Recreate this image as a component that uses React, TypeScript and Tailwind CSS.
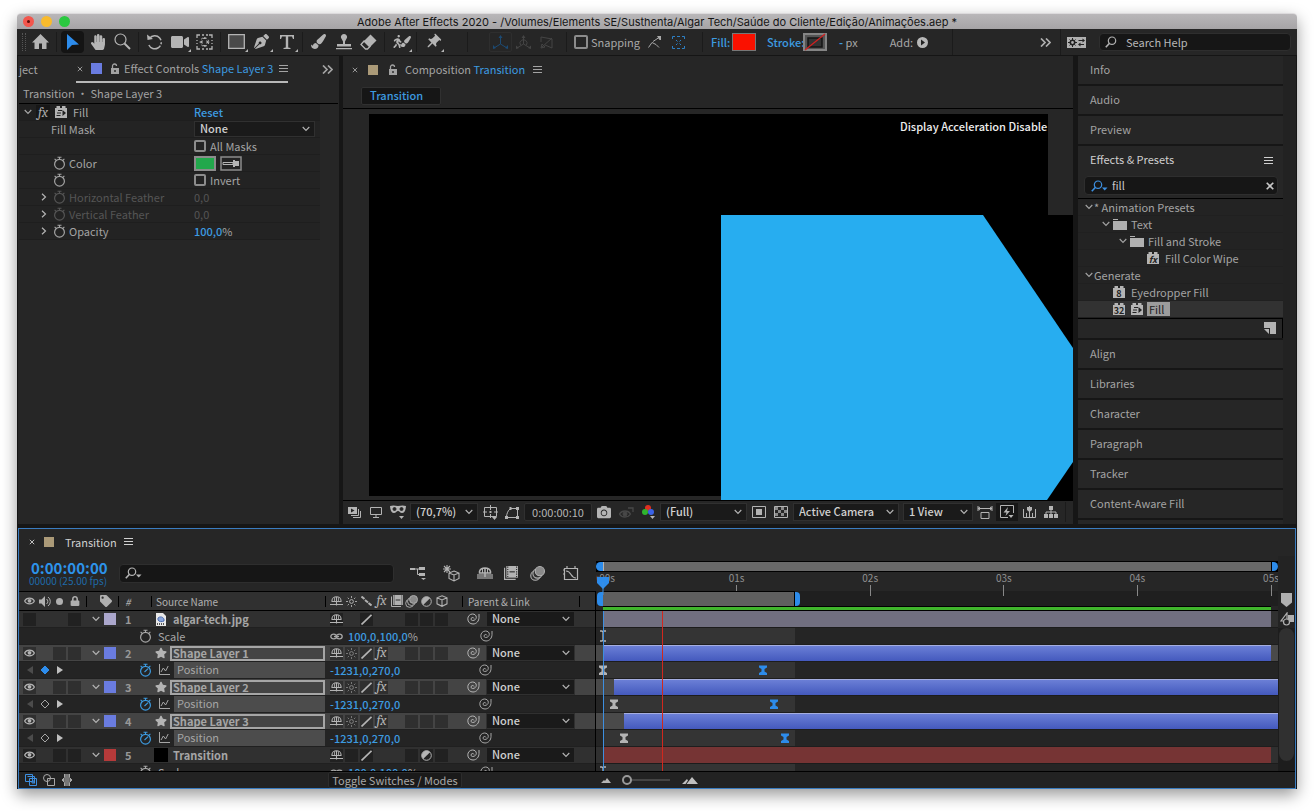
import type { ReactNode } from "react";
import clsx from "clsx";
import {
  FaCamera,
  FaHandPaper,
  FaLock,
  FaPaintBrush,
  FaPenNib,
  FaStar,
  FaTag,
  FaVideo,
  FaWalking,
} from "react-icons/fa";
import { MdPushPin } from "react-icons/md";

/* ---------- icons ---------- */

type SvgProps = {
  w: number;
  h?: number;
  className?: string;
  children: ReactNode;
};

function Svg({ w, h = w, className, children }: SvgProps) {
  return (
    <svg
      width={w}
      height={h}
      viewBox={`0 0 ${w} ${h}`}
      fill="none"
      stroke="currentColor"
      className={clsx("shrink-0", className)}
      aria-hidden="true"
    >
      {children}
    </svg>
  );
}

const Chevron = ({ className }: { className?: string }) => (
  <Svg w={8} h={6} className={className}>
    <path d="M.7 1l3.3 3.5L7.3 1" strokeWidth="1.1" />
  </Svg>
);

const ChevronRight = () => (
  <Svg w={6} h={8}>
    <path d="M1 .7l3.5 3.3L1 7.3" strokeWidth="1.2" />
  </Svg>
);

const DoubleChevron = () => (
  <Svg w={11} h={9}>
    <path d="M1 .5l4 4-4 4M6 .5l4 4-4 4" strokeWidth="1.7" />
  </Svg>
);

const Menu = () => (
  <Svg w={9} h={8}>
    <path d="M0 .5h9M0 3.5h9M0 6.5h9" strokeWidth="1" />
  </Svg>
);

const Close = () => (
  <Svg w={6}>
    <path d="M.8.8l4.4 4.4M5.2.8L.8 5.2" strokeWidth=".9" />
  </Svg>
);

const OpenLock = () => (
  <Svg w={10} h={11}>
    <path d="M2.5 6V3a2 2 0 0 1 4 0" strokeWidth="1.3" />
    <path d="M1 5h8v6H1z" fill="currentColor" stroke="none" />
    <path d="M5 7v2" stroke="#262626" strokeWidth="1.4" />
  </Svg>
);

const Stopwatch = () => (
  <Svg w={13} h={14}>
    <circle cx="6.5" cy="8.2" r="4.9" strokeWidth="1.2" />
    <path d="M6.5 1.5v2M4.5 1.2h4M1.6 2.8l1.6 1.6M11.4 2.8L9.8 4.4" strokeWidth="1.1" />
  </Svg>
);

const StopwatchOn = () => (
  <Svg w={13} h={14}>
    <circle cx="6.5" cy="8.2" r="4.9" strokeWidth="1.2" />
    <path d="M6.5 1.5v2M4.5 1.2h4M1.6 2.8l1.6 1.6M11.4 2.8L9.8 4.4M5.5 9l3.6-3.4" strokeWidth="1.1" />
  </Svg>
);

const GraphIcon = () => (
  <Svg w={12} h={12}>
    <path d="M1.5 0v10.5H12M3 8l2.3-4 2.3 3 2.6-5" strokeWidth="1" />
  </Svg>
);

const Spiral = () => (
  <Svg w={13} h={12}>
    <path
      d="M7 5.5A1.5 1.5 0 1 0 5.7 7.5C7.8 7.5 9.3 6 9.3 4.3 9.3 2.3 7.7 1 5.5 1A4.8 4.8 0 0 0 .8 5.8C.8 9 3 11 6 11c3.5 0 6-3 6-6.5V1"
      strokeWidth="1"
    />
  </Svg>
);

const Search = ({ arrow }: { arrow?: boolean }) => (
  <Svg w={arrow ? 17 : 12} h={12}>
    <circle cx="7" cy="4.7" r="3.7" strokeWidth="1.2" />
    <path d="M4.5 7.3L.8 11.3" strokeWidth="1.6" />
    {arrow && <path d="M11 7.5h5.5L13.7 10.5z" fill="currentColor" stroke="none" />}
  </Svg>
);

const Shy = () => (
  <Svg w={13} h={12}>
    <path d="M2 6.5V5.5a4.5 3.8 0 0 1 9 0v1zM0 9.5h13M6.5 2v8.5" strokeWidth="1.1" />
    <path d="M4.5 2.500v4M8.500 2.500v4" strokeWidth=".8" />
  </Svg>
);

const Sun = () => (
  <Svg w={11}>
    <circle cx="5.5" cy="5.5" r="1.9" />
    <path d="M5.5 0v2M5.5 9v2M0 5.5h2M9 5.5h2M1.7 1.7L3 3M8 8l1.3 1.3M9.3 1.7L8 3M3 8L1.7 9.3" strokeWidth=".9" />
  </Svg>
);

const Slash = () => (
  <Svg w={11}>
    <path d="M.5 10.5L10.5.8" strokeWidth="1.7" />
  </Svg>
);

const Quality = () => (
  <Svg w={11} h={10}>
    <path d="M.5.5l3 2.5M4 4l3 2.5M7.5 7l3 2.5" strokeWidth="2" />
  </Svg>
);

const Film = ({ size = 12 }: { size?: number }) => (
  <svg width={size} height={size} viewBox="0 0 12 12" fill="none" stroke="currentColor" aria-hidden="true">
    <path d="M.5 1.5v10h9.5" />
    <path d="M2 0h10v10H2z" fill="currentColor" stroke="none" />
    <path d="M3.2.5v9M10.8.5v9" stroke="#303030" strokeDasharray="1 1" />
    <path d="M4.7 5h4.6" stroke="#303030" />
  </svg>
);

const MotionBlur = ({ size = 12 }: { size?: number }) => (
  <svg width={size} height={size} viewBox="0 0 14 14" fill="#303030" stroke="currentColor" aria-hidden="true">
    <circle cx="5" cy="9" r="4.3" />
    <circle cx="7" cy="7" r="4.3" />
    <circle cx="9.2" cy="4.8" r="4.3" fill="#8a8a8a" />
  </svg>
);

const Adjustment = () => (
  <Svg w={11}>
    <circle cx="5.5" cy="5.5" r="4.8" />
    <path d="M9 2.2A4.7 4.7 0 0 0 2.2 9z" fill="currentColor" stroke="none" />
  </Svg>
);

const Cube = () => (
  <Svg w={12}>
    <path d="M6 .8l5 2v6l-5 2.5-5-2.5v-6zM1 2.8l5 2.2 5-2.2M6 5v6.3" strokeWidth="1.1" />
  </Svg>
);

const Eye = () => (
  <Svg w={11} h={8}>
    <path d="M.6 4C2.5.2 8.5.2 10.4 4 8.5 7.8 2.5 7.8.6 4z" strokeWidth="1.1" />
    <circle cx="5.5" cy="3.8" r="1.9" fill="currentColor" stroke="none" />
  </Svg>
);

const Link = () => (
  <Svg w={13} h={7}>
    <ellipse cx="3.7" cy="3.5" rx="2.9" ry="2.3" strokeWidth="1.3" />
    <ellipse cx="9.3" cy="3.5" rx="2.9" ry="2.3" strokeWidth="1.3" />
    <path d="M4 3.5h5" strokeWidth="1.3" />
  </Svg>
);

/* plug-in brick shown beside every effect */
function Brick({ children }: { children: ReactNode }) {
  return (
    <svg width={12} height={12} viewBox="0 0 12 12" className="shrink-0" aria-hidden="true">
      <path d="M0 2h1.5V0H5v2h2V0h3.5v2H12v10H0z" fill="#b4b4b4" />
      <g fill="#222" stroke="none">
        {children}
      </g>
    </svg>
  );
}

const BrickArrow = () => (
  <Brick>
    <path d="M3 4h4v1H3zM2 6.5h4v1H2zM1.5 9h4v1h-4zM7.5 4l3.500 3-3.500 3z" />
  </Brick>
);

const BrickText = ({ label, italic }: { label: string; italic?: boolean }) => (
  <Brick>
    <text
      x="6"
      y="10.5"
      fontSize="9"
      fontWeight="700"
      fontStyle={italic ? "italic" : "normal"}
      textAnchor="middle"
    >
      {label}
    </text>
  </Brick>
);

const Folder = () => (
  <Svg w={14} h={11}>
    <path d="M0 0h5v1H0zM0 2h14v9H0z" fill="#b0b0b0" stroke="none" />
  </Svg>
);

const AnchorTool = () => (
  <Svg w={17} h={16}>
    <path d="M1 4V1h3M6 1h2M10 1h2M13 1h3v3M16 6v1M16 9v1M16 12v3h-3M12 15h-2M8 15H6M4 15H1v-3M1 10V9M1 7V6" strokeWidth="1.3" />
    <path d="M4 8L6.5 6v4zM13 8L10.5 6v4zM8.5 3l2 2h-4zM8.5 13l2-2h-4z" fill="currentColor" stroke="none" />
    <circle cx="8.5" cy="8" r="4.3" strokeDasharray="2 2" />
  </Svg>
);

/* ---------- small controls ---------- */

function Sep({ className }: { className?: string }) {
  return <div className={clsx("mx-[3px] h-5 w-px shrink-0 bg-[#1b1b1b]", className)} />;
}

type ToolProps = {
  name: string;
  active?: boolean;
  more?: boolean;
  children: ReactNode;
};

function Tool({ name, active, more, children }: ToolProps) {
  return (
    <button
      type="button"
      aria-label={name}
      className={clsx(
        "relative mx-px flex h-[22px] w-[23px] shrink-0 items-center justify-center rounded-sm pb-px",
        active ? "bg-[#141414] text-[#2d8ceb]" : "text-[#b4b4b4]",
      )}
    >
      {children}
      {more && (
        <Svg w={3} className="absolute right-0 bottom-px">
          <path d="M3 0v3H0z" fill="currentColor" stroke="none" />
        </Svg>
      )}
    </button>
  );
}

type DropdownProps = {
  label: string;
  value: string;
  className?: string;
};

function Dropdown({ label, value, className }: DropdownProps) {
  return (
    <div className={clsx("relative flex shrink-0 items-center border border-[#303030] bg-[#1a1a1a]", className)}>
      <select
        aria-label={label}
        defaultValue={value}
        className="-my-1 block h-4 w-full appearance-none bg-transparent pb-px pl-[5px] leading-[15px] font-medium text-[#d0d0d0] outline-none"
      >
        <option>{value}</option>
      </select>
      <Chevron className="pointer-events-none absolute top-1/2 right-1 -mt-[3px] text-[#b4b4b4]" />
    </div>
  );
}

function IconCell({ name, dark, children }: { name: string; dark?: boolean; children: ReactNode }) {
  return (
    <button
      type="button"
      aria-label={name}
      className={clsx("flex h-[18px] w-[22px] shrink-0 items-center justify-center", dark && "bg-[#171717]")}
    >
      {children}
    </button>
  );
}

/* ---------- title and tools ---------- */

function TitleBar() {
  return (
    <header className="flex h-4 items-center rounded-t-sm border-t border-[#dcdadc] bg-linear-to-b from-[#b9b7b9] to-[#a6a4a6]">
      <div className="flex w-0 gap-[7px] pl-[6px]">
        <span className="flex size-[11px] shrink-0 items-center justify-center rounded-full bg-[#f2564d]">
          <span className="size-[3px] rounded-full bg-[#5c0b06]" />
        </span>
        <span className="size-[11px] shrink-0 rounded-full bg-[#f9bb2d]" />
        <span className="size-[11px] shrink-0 rounded-full bg-[#2bc840]" />
      </div>
      <h1 className="flex-1 truncate pr-[6px] text-center font-['Inter',sans-serif] text-[11px] leading-[14px] text-[#151515]">
        Adobe After Effects 2020 - /Volumes/Elements SE/Susthenta/Algar Tech/Saúde do Cliente/Edição/Animações.aep *
      </h1>
    </header>
  );
}

function Toolbar() {
  return (
    <div className="flex h-[27px] items-center overflow-hidden border-b border-[#151515] bg-[#262626]">
      <div className="ml-[5px] h-[18px] w-1 shrink-0 border-x border-dotted border-[#555]" />
      <div className="ml-[2px]">
        <Tool name="Home">
          <Svg w={17} h={15}>
            <path d="M8.5 0L17 8.5h-2.5V15H10V9.5H7V15H2.5V8.5H0z" fill="currentColor" stroke="none" />
          </Svg>
        </Tool>
      </div>
      <Sep />
      <Tool name="Selection" active>
        <Svg w={13} h={16}>
          <path d="M1 0l12 10.5-7 .5-5 5z" fill="currentColor" stroke="none" />
        </Svg>
      </Tool>
      <Tool name="Hand">
        <FaHandPaper size={16} />
      </Tool>
      <Tool name="Zoom">
        <Svg w={17}>
          <circle cx="6.5" cy="6.5" r="5.5" strokeWidth="1.2" />
          <path d="M10.5 10.5l5.500 5.500" strokeWidth="2" />
        </Svg>
      </Tool>
      <Sep />
      <Tool name="Rotation">
        <Svg w={17} h={16}>
          <path d="M3.5 4.5A6.5 6.5 0 1 1 2.5 10" strokeWidth="1.5" strokeDasharray="14 2 2 1.5" />
          <path d="M1 .5l.5 5.5 5.5-1z" fill="currentColor" stroke="none" />
        </Svg>
      </Tool>
      <Tool name="Camera" more>
        <FaVideo size={18} />
      </Tool>
      <Tool name="Pan behind">
        <AnchorTool />
      </Tool>
      <Sep />
      <Tool name="Rectangle" more>
        <Svg w={17} h={15}>
          <path d="M.7.7h15.6v13.6H.7z" fill="#4a4a4a" strokeWidth="1.3" />
        </Svg>
      </Tool>
      <Tool name="Pen" more>
        <FaPenNib size={15} />
      </Tool>
      <Tool name="Type" more>
        <Svg w={14}>
          <path d="M0 0h14v4h-1l-1-2.5H8.2V12.5l2.3.5v1h-7v-1l2.300-.5V1.5H2L1 4H0z" fill="currentColor" stroke="none" />
        </Svg>
      </Tool>
      <Sep />
      <Tool name="Brush">
        <FaPaintBrush size={15} />
      </Tool>
      <Tool name="Clone stamp">
        <Svg w={16}>
          <path d="M8 0a3 3 0 0 1 2.3 5L9 7.5v2.5h6v2.5H1V10h6V7.5L5.7 5A3 3 0 0 1 8 0zM0 14h16v1.3H0z" fill="currentColor" stroke="none" />
        </Svg>
      </Tool>
      <Tool name="Eraser">
        <Svg w={17} h={16}>
          <path d="M10.5.5l6 6-7 7-6-6z" fill="currentColor" stroke="none" />
          <path d="M4.5 6.5L1 10.500l4.500 4.500h2l3-3" strokeWidth="1.3" />
        </Svg>
      </Tool>
      <Sep />
      <Tool name="Roto brush" more>
        <FaWalking size={13} />
        <FaPaintBrush size={11} className="-ml-1" />
      </Tool>
      <Sep />
      <Tool name="Puppet pin" more>
        <MdPushPin size={18} className="rotate-45" />
      </Tool>
      <Sep className="ml-[22px]" />
      <div className="ml-[18px] flex shrink-0 items-center text-[#454545]">
        <button type="button" aria-label="Local axis" className="flex h-5 w-[23px] items-center justify-center rounded-xs border border-[#2e2e2e] text-[#1c4a73]">
          <Svg w={15} h={14}>
            <path d="M7.5 1v8M7.5 9L1 13M7.5 9l6.5 4" />
            <path d="M7.5 0l2 3h-4zM0 14v-4l3 3zM15 14v-4l-3 3z" fill="currentColor" stroke="none" />
          </Svg>
        </button>
        <button type="button" aria-label="World axis" className="flex h-5 w-[23px] items-center justify-center">
          <Svg w={15} h={14}>
            <path d="M7.5 1v8M7.5 9L1 13M7.5 9l6.5 4" />
            <path d="M4.5 10a3.5 3.5 0 1 1 6 0" />
            <path d="M7.5 0l2 3h-4zM0 14v-3.5l3 2.5zM15 14v-3.5l-3 2.500z" fill="currentColor" stroke="none" />
          </Svg>
        </button>
        <button type="button" aria-label="View axis" className="flex h-5 w-[23px] items-center justify-center">
          <Svg w={13}>
            <path d="M1 1l11 2v9L5 9M1 1v5M12 2L2 11M1 12l1-4 3 3z" />
          </Svg>
        </button>
      </div>
      <Sep className="ml-2" />
      <label className="ml-1 flex w-[69px] shrink-0 items-center gap-[3px] text-[#a8a8a8]">
        <input type="checkbox" className="size-[14px] shrink-0 appearance-none rounded-xs border-2 border-[#8c8c8c]" />
        Snapping
      </label>
      <IconCell name="Snap edges">
        <Svg w={13} h={12} className="text-[#a8a8a8]">
          <path d="M.5 11.5L4 6.5l4 2 3 3M5 5.5l6-4" />
          <path d="M9 0h4v4h-1.5z" fill="currentColor" stroke="none" />
        </Svg>
      </IconCell>
      <div className="ml-[2px] flex">
        <IconCell name="Snap extend">
          <Svg w={13} className="text-[#2d7fc4]">
            <path d="M.5 3V.5H3M5 .5h3M10 .5h2.5V3M12.5 10v2.5H10M8 12.5H5M3 12.5H.5V10M4 4l1.500 1.500M9 4L7.500 5.500M4 9l1.500-1.500M9 9L7.500 7.500" />
          </Svg>
        </IconCell>
      </div>
      <Sep className="ml-[13px]" />
      <button type="button" className="ml-[5px] flex shrink-0 items-center font-medium text-[#3d9be0]">
        <span className="w-[21px] text-left">Fill:</span>
        <span className="h-[18px] w-6 border border-[#777] bg-[#fa1100]" />
      </button>
      <button type="button" className="ml-[11px] flex shrink-0 items-center font-medium text-[#3d9be0]">
        <span className="w-9 text-left whitespace-nowrap">Stroke:</span>
        <Svg w={24} h={18}>
          <path d="M1 1h22v16H1z" fill="#555" stroke="#858585" strokeWidth="2" />
          <path d="M5 5h14v9H5z" fill="#333" stroke="#151515" strokeWidth="1.5" />
          <path d="M2 17L22 1" stroke="#d41f1f" strokeWidth="1.3" />
        </Svg>
      </button>
      <span className="ml-3 shrink-0 text-[#a8a8a8]">
        <b className="text-[#3d9be0]">-</b> px
      </span>
      <button type="button" className="ml-8 flex shrink-0 items-center gap-1 text-[#a8a8a8]">
        Add:
        <Svg w={11}>
          <circle cx="5.5" cy="5.5" r="5.5" fill="#b8b8b8" stroke="none" />
          <path d="M4 2.5l4 3-4 3z" fill="#222" stroke="none" />
        </Svg>
      </button>
      <Sep className="ml-6 h-[26px]" />
      <div className="ml-auto flex shrink-0 items-center pr-[6px] text-[#b0b0b0]">
        <button type="button" aria-label="More workspaces">
          <DoubleChevron />
        </button>
        <Sep className="ml-[9px] h-[26px]" />
        <button type="button" aria-label="Workspace" className="mr-[13px] ml-[3px]">
          <Svg w={19} h={11}>
            <path d="M0 0h19v11H0z" fill="#b0b0b0" stroke="none" />
            <circle cx="5.5" cy="5.5" r="2.2" stroke="#222" strokeWidth="1.6" />
            <path d="M5.5 1v2M5.5 8v2M1 5.5h2M8 5.5h2M2.5 2.5l1 1M8.5 2.5l-1 1M2.5 8.5l1-1M8.5 8.5l-1-1M11.5 3.5h5M13 7.5h4" stroke="#222" />
            <path d="M11 7.5l2.5-2v4zM18 3.5l-2.5-2v4z" fill="#222" stroke="none" />
          </Svg>
        </button>
        <label className="flex h-[18px] w-48 items-center rounded-sm border border-[#2e2e2e] bg-[#161616] pl-[5px]">
          <Search />
          <input
            type="text"
            aria-label="Search Help"
            placeholder="Search Help"
            className="ml-[9px] w-full min-w-0 bg-transparent outline-none placeholder:text-[#b8b8b8]"
          />
        </label>
      </div>
    </div>
  );
}

/* ---------- effect controls ---------- */

function EffectRow({ label, dim, expandable, children }: { label?: string; dim?: boolean; expandable?: boolean; children: ReactNode }) {
  return (
    <div className={clsx("flex h-[17px] items-center border-b border-[#1e1e1e]", dim ? "text-[#555]" : "text-[#a3a3a3]")}>
      <div className="flex w-[175px] shrink-0 items-center pl-[22px]">
        <span className="w-3 text-[#b4b4b4]">{expandable && <ChevronRight />}</span>
        <Stopwatch />
        <span className="ml-[3px]">{label}</span>
      </div>
      {children}
    </div>
  );
}

function EffectControls() {
  return (
    <section className="flex w-[321px] shrink-0 flex-col overflow-hidden bg-[#262626] px-px">
      <div className="flex h-[27px] shrink-0 items-start text-[#a3a3a3]">
        <span className="w-[57px] shrink-0 leading-[26px]">ject</span>
        <div className="flex h-[27px] w-[212px] shrink-0 items-center border-b-2 border-[#b8b8b8]">
          <button type="button" aria-label="Close tab" className="pl-px">
            <Close />
          </button>
          <span className="ml-2 size-[11px] shrink-0 bg-[#6a7ce0]" />
          <span className="ml-2">
            <OpenLock />
          </span>
          <h2 className="ml-1 whitespace-nowrap">
            Effect Controls <span className="text-[#3d9be0]">Shape Layer 3</span>
          </h2>
          <button type="button" aria-label="Panel menu" className="ml-auto">
            <Menu />
          </button>
        </div>
        <button type="button" aria-label="More tabs" className="mt-[9px] mr-[5px] ml-auto">
          <DoubleChevron />
        </button>
      </div>
      <p className="h-[21px] border-b border-black pl-1 leading-5 text-[#a3a3a3]">Transition &middot; Shape Layer 3</p>
      <div className="mr-[18px] bg-[#232323]">
        <div className="flex h-[17px] items-center border-b border-[#1e1e1e] bg-[#202020] text-[#a8a8a8]">
          <div className="flex w-[175px] shrink-0 items-center pl-[5px]">
            <Chevron />
            <span className="ml-1 w-[14px] bg-[#171717] text-center font-serif text-[14px] leading-[15px] italic">fx</span>
            <span className="mr-[6px] ml-[5px]">
              <BrickArrow />
            </span>
            Fill
          </div>
          <button type="button" className="font-medium text-[#3d9be0]">
            Reset
          </button>
        </div>
        <div className="flex h-[17px] items-center border-b border-[#1e1e1e] text-[#a3a3a3]">
          <span className="w-[175px] shrink-0 pl-8">Fill Mask</span>
          <Dropdown label="Fill Mask" value="None" className="h-4 w-[121px]" />
        </div>
        <div className="flex h-[17px] items-center border-b border-[#1e1e1e] pl-[175px] text-[#a3a3a3]">
          <label className="flex items-center gap-1">
            <input type="checkbox" className="size-3 appearance-none rounded-xs border-2 border-[#8c8c8c]" />
            All Masks
          </label>
        </div>
        <EffectRow label="Color">
          <button type="button" aria-label="Fill color" className="h-[15px] w-[22px] border-2 border-[#8c8c8c] bg-[#22a84c]" />
          <button type="button" aria-label="Eyedropper" className="ml-1">
            <Svg w={22} h={15}>
              <path d="M1 1h20v13H1z" stroke="#8c8c8c" strokeWidth="1.5" />
              <path d="M3 6.5h10v2H3z" fill="#222" stroke="#b4b4b4" />
              <path d="M13 4h2v1h4v5h-4v1h-2z" fill="#b4b4b4" stroke="none" />
            </Svg>
          </button>
        </EffectRow>
        <EffectRow>
          <label className="flex items-center gap-1">
            <input type="checkbox" className="size-3 appearance-none rounded-xs border-2 border-[#8c8c8c]" />
            Invert
          </label>
        </EffectRow>
        <EffectRow label="Horizontal Feather" dim expandable>
          0,0
        </EffectRow>
        <EffectRow label="Vertical Feather" dim expandable>
          0,0
        </EffectRow>
        <EffectRow label="Opacity" expandable>
          <span className="font-medium text-[#3d9be0]">100,0</span>%
        </EffectRow>
      </div>
    </section>
  );
}

/* ---------- composition viewer ---------- */

function Composition() {
  return (
    <section className="flex min-w-0 flex-1 flex-col bg-[#262626]">
      <div className="flex h-[27px] shrink-0 items-center pl-[9px] text-[#a3a3a3]">
        <button type="button" aria-label="Close tab">
          <Close />
        </button>
        <span className="ml-[10px] size-[10px] bg-[#ab9a78]" />
        <span className="ml-[10px]">
          <OpenLock />
        </span>
        <h2 className="mr-2 ml-[7px]">
          Composition <span className="text-[#3d9be0]">Transition</span>
        </h2>
        <Menu />
      </div>
      <div className="flex h-[26px] shrink-0 items-center border-b border-black pl-[18px]">
        <button type="button" className="h-[18px] w-20 rounded-xs border border-[#303030] bg-[#161616] pb-px pl-2 text-left font-medium text-[#3d9be0]">
          Transition
        </button>
      </div>
      <div className="relative min-h-0 flex-1 overflow-hidden">
        <svg
          viewBox="0 0 730 391"
          preserveAspectRatio="xMinYMin slice"
          className="absolute inset-0 h-full w-full"
          aria-label="Shape artwork"
        >
          <path d="M26 5h679v382H26z" fill="#000" />
          <path d="M378 106h352v285H378z" fill="#000" />
          <path d="M378 106h262l90 133v114l-26 38H378z" fill="#27adf0" />
        </svg>
        <p className="absolute top-[10px] left-[557px] font-medium whitespace-nowrap text-[#eee]">
          Display Acceleration Disable
        </p>
      </div>
      <div className="flex h-6 shrink-0 items-center overflow-hidden border-t border-black pb-px text-[#b4b4b4]">
        <IconCell name="Always preview">
          <Svg w={13} h={11}>
            <path d="M0 0h9v7H0z" fill="currentColor" stroke="none" />
            <path d="M3 1.5L6.5 3.5 3 5.5z" fill="#222" stroke="none" />
            <path d="M3 8.5h7.5V2M5 10.5h7.5V4" />
          </Svg>
        </IconCell>
        <IconCell name="Main viewer">
          <Svg w={12} h={11}>
            <path d="M.5.5h11v7H.5zM6 8v2M3 10.5h6" />
          </Svg>
        </IconCell>
        <IconCell name="Adaptive resolution">
          <Svg w={16} h={14}>
            <path d="M0 1c3-1 5-.5 8 0 3-.5 5-1 8 0-.5 5-1.5 7-4 7-2 0-2.5-2-4-2s-2 2-4 2C1.5 8 .5 6 0 1z" fill="currentColor" stroke="none" />
            <circle cx="4.5" cy="4" r="1.5" fill="#262626" stroke="#262626" />
            <circle cx="11.5" cy="4" r="1.5" fill="#262626" stroke="#262626" />
            <path d="M9 11h5l-2.5 3z" fill="currentColor" stroke="none" />
          </Svg>
        </IconCell>
        <Dropdown label="Magnification" value="(70,7%)" className="mx-px h-[18px] w-[68px]" />
        <IconCell name="Grid and guides">
          <Svg w={15} h={15}>
            <path d="M1.5 2.5h12v9h-12zM7.5 0v5M7.5 9v4M0 7h4M11 7h4M6 7h3M7.5 6v2" />
            <path d="M9 12h5l-2.5 3z" fill="currentColor" stroke="none" />
          </Svg>
        </IconCell>
        <IconCell name="Mask visibility">
          <Svg w={14} h={13}>
            <path d="M1.5 11.5c0-4 1.5-7 4-9h7v9z" />
            <path d="M0 10h3v3H0zM4.5 1h2v3h-2zM11 1h3v3h-3zM11 10h3v3h-3z" fill="currentColor" stroke="none" />
          </Svg>
        </IconCell>
        <button type="button" className="mx-px h-[18px] w-[68px] shrink-0 rounded-xs border border-[#303030] bg-[#1a1a1a] text-center">
          0:00:00:10
        </button>
        <IconCell name="Snapshot">
          <FaCamera size={14} />
        </IconCell>
        <IconCell name="Show snapshot">
          <Svg w={15} h={12} className="text-[#484848]">
            <path d="M.5 8C3 4 9 4 11.5 8 9 12 3 12 .5 8zM9 2h5v4" strokeWidth="1.3" />
            <circle cx="6" cy="8" r="2" fill="currentColor" />
          </Svg>
        </IconCell>
        <IconCell name="Channels">
          <Svg w={13} h={14}>
            <circle cx="6" cy="3" r="3" fill="#e03020" stroke="none" />
            <circle cx="3" cy="7" r="3" fill="#2fb52f" stroke="none" />
            <circle cx="9" cy="7" r="3" fill="#3a62e8" stroke="none" />
            <path d="M8 11h5l-2.5 3z" fill="currentColor" stroke="none" />
          </Svg>
        </IconCell>
        <Dropdown label="Resolution" value="(Full)" className="mx-px h-[18px] w-[87px]" />
        <IconCell name="Region of interest">
          <Svg w={14} h={12}>
            <path d="M.5.5h13v11H.5z" />
            <path d="M4 3h6v6H4z" fill="currentColor" stroke="none" />
          </Svg>
        </IconCell>
        <IconCell name="Transparency grid">
          <Svg w={14} h={12}>
            <path d="M.5.5h13v11H.5z" />
            <path d="M1 1h3v3H1zM7 1h3v3H7zM4 4h3v3H4zM10 4h3v3h-3zM1 7h3v3H1zM7 7h3v3H7z" fill="#8a8a8a" stroke="none" />
          </Svg>
        </IconCell>
        <Dropdown label="3D view" value="Active Camera" className="mx-px h-[18px] w-[106px]" />
        <Dropdown label="View layout" value="1 View" className="mr-px ml-[3px] h-[18px] w-[70px]" />
        <IconCell name="Pixel aspect">
          <Svg w={16} h={13}>
            <path d="M1 2.5h14M1 0v5M15 0v5M4 6.5h8v6H4zM3 1L1 2.5 3 4M13 1l2 1.5L13 4" />
          </Svg>
        </IconCell>
        <IconCell name="Fast previews" dark>
          <Svg w={14}>
            <path d="M13.5 8V.5H.5v12H8" />
            <path d="M8 2L3.5 7.5h3L5.5 11 10 6H7zM8.5 10h5L11 13z" fill="currentColor" stroke="none" />
          </Svg>
        </IconCell>
        <IconCell name="Timeline">
          <Svg w={13}>
            <path d="M.5 3v8.5h12V3M3.5 7v4M9.5 7v4M6.5 5v6M6.5 0v4" />
            <path d="M4 1h5v3L6.5 6 4 4z" fill="currentColor" stroke="none" />
          </Svg>
        </IconCell>
        <IconCell name="Flowchart">
          <Svg w={14} h={13}>
            <path d="M5 0h4v4H5zM0 8h4v4H0zM5 8h4v4H5zM10 8h4v4h-4z" fill="currentColor" stroke="none" />
            <path d="M7 4v4M2 8V6h10v2" />
          </Svg>
        </IconCell>
        <Sep className="mx-[1px]" />
        <span className="ml-1 flex w-1 shrink-0 overflow-hidden">
          <Svg w={13}>
            <circle cx="6.5" cy="6.5" r="5" strokeWidth="3" />
          </Svg>
        </span>
      </div>
    </section>
  );
}

/* ---------- side panels ---------- */

function PanelHeading({ children }: { children: ReactNode }) {
  return <h2 className="h-[30px] shrink-0 border-b-2 border-[#161616] bg-[#262626] pl-3 leading-[26px] text-[#a3a3a3]">{children}</h2>;
}

function TreeRow({ className, children }: { className?: string; children: ReactNode }) {
  return <li className={clsx("flex h-[17px] items-center border-b border-[#202020] text-[#a3a3a3]", className)}>{children}</li>;
}

function SidePanels() {
  return (
    <aside className="ml-px flex w-[218px] shrink-0 overflow-hidden bg-[#222] pr-[13px]">
      <div className="flex w-full flex-col">
        {["Info", "Audio", "Preview"].map((name) => (
          <PanelHeading key={name}>{name}</PanelHeading>
        ))}
        <section className="border-b-2 border-[#161616] bg-[#262626]">
          <div className="flex h-[30px] items-start justify-between pr-[10px] pl-3 text-[#d0d0d0]">
            <h2 className="leading-[26px]">Effects &amp; Presets</h2>
            <span className="pt-[11px]">
              <Menu />
            </span>
          </div>
          <div className="mr-[5px] mb-[3px] ml-[6px] flex h-[19px] items-center rounded-sm border border-[#2e2e2e] bg-[#161616] pr-[3px] pl-[6px] text-[#3d8fe0]">
            <Search arrow />
            <input
              type="text"
              aria-label="Search effects"
              defaultValue="fill"
              className="ml-1 w-full min-w-0 bg-transparent text-[#c8c8c8] outline-none"
            />
            <button type="button" aria-label="Clear search" className="text-[#c8c8c8]">
              <Svg w={8}>
                <path d="M.7.7l6.6 6.6M7.3.7L.7 7.3" strokeWidth="1.6" />
              </Svg>
            </button>
          </div>
          <ul className="border-y border-black bg-[#232323]">
            <TreeRow className="gap-px pl-[7px]">
              <Chevron /> * Animation Presets
            </TreeRow>
            <TreeRow className="gap-[3px] pl-6">
              <Chevron /> <Folder /> <span className="ml-px">Text</span>
            </TreeRow>
            <TreeRow className="gap-[3px] pl-[41px]">
              <Chevron /> <Folder /> <span className="ml-px">Fill and Stroke</span>
            </TreeRow>
            <TreeRow className="gap-[6px] pl-[69px]">
              <BrickText label="fx" italic /> Fill Color Wipe
            </TreeRow>
            <TreeRow className="gap-px pl-[7px]">
              <Chevron /> Generate
            </TreeRow>
            <TreeRow className="gap-[6px] pl-[35px]">
              <BrickText label="8" /> Eyedropper Fill
            </TreeRow>
            <TreeRow className="gap-[6px] bg-[#323232] pl-[35px]">
              <BrickText label="32" /> <BrickArrow />
              <span className="-ml-[2px] w-[23px] bg-[#9c9c9c] pl-[2px] leading-[14px] text-[#222]">Fill</span>
            </TreeRow>
          </ul>
          <div className="flex h-[19px] items-center justify-end border-r border-black pr-[6px] pb-[2px]">
            <button type="button" aria-label="New preset">
              <Svg w={12}>
                <path d="M0 0h12v12H6V6H0zM0 7h5v5z" fill="#b4b4b4" stroke="none" />
              </Svg>
            </button>
          </div>
        </section>
        {["Align", "Libraries", "Character", "Paragraph", "Tracker", "Content-Aware Fill"].map((name) => (
          <PanelHeading key={name}>{name}</PanelHeading>
        ))}
        <div className="flex-1 bg-[#262626]" />
      </div>
    </aside>
  );
}

/* ---------- timeline ---------- */

type Layer = {
  id: number;
  name: string;
  color: string;
  kind: "image" | "shape" | "solid";
  selected?: boolean;
  start: number;
  end: number;
  bar: string;
  prop: "Scale" | "Position";
  onKey?: boolean;
  keys: number[];
};

const SHAPE_BAR = "border-t border-[#a5aee0] bg-linear-to-b from-[#6b7fd6] to-[#4459bd]";

const layers: Layer[] = [
  { id: 1, name: "algar-tech.jpg", color: "bg-[#aba7cc]", kind: "image", start: 0, end: 5, bar: "bg-[#716f80]", prop: "Scale", keys: [0] },
  { id: 2, name: "Shape Layer 1", color: "bg-[#6a7ce0]", kind: "shape", selected: true, start: 0, end: 5, bar: SHAPE_BAR, prop: "Position", onKey: true, keys: [0, 1.2] },
  { id: 3, name: "Shape Layer 2", color: "bg-[#6a7ce0]", kind: "shape", selected: true, start: 0.08, end: 5.08, bar: SHAPE_BAR, prop: "Position", keys: [0.08, 1.28] },
  { id: 4, name: "Shape Layer 3", color: "bg-[#6a7ce0]", kind: "shape", selected: true, start: 0.16, end: 5.16, bar: SHAPE_BAR, prop: "Position", keys: [0.16, 1.36] },
  { id: 5, name: "Transition", color: "bg-[#b53a3a]", kind: "solid", start: 0, end: 5, bar: "bg-[#763434]", prop: "Scale", keys: [0] },
];

const DURATION = 5;
const at = (seconds: number) => `${(seconds / DURATION) * 100}%`;

function Box({ dark, children }: { dark?: boolean; children?: ReactNode }) {
  return <span className={clsx("flex size-[13px] shrink-0 items-center justify-center", dark && "bg-black/30")}>{children}</span>;
}

function LayerRow({ layer }: { layer: Layer }) {
  const shape = layer.kind === "shape";
  return (
    <div className={clsx("flex h-[17px] items-center border-b border-[#202020] pl-1 text-[#b4b4b4]", layer.selected ? "bg-[#444]" : "bg-[#303030]")}>
      <div className="flex gap-[2px]">
        <Box dark>{layer.kind !== "image" && <Eye />}</Box>
        <Box />
        <Box dark={layer.kind !== "image"} />
        <Box dark />
      </div>
      <Chevron className="ml-[11px]" />
      <span className={clsx("ml-1 size-3 shrink-0", layer.color)} />
      <b className="ml-[9px] w-[27px] shrink-0 text-[#989898]">{layer.id}</b>
      <span className="flex w-[18px] shrink-0 justify-center">
        {shape && <FaStar size={12} />}
        {layer.kind === "solid" && <span className="size-[14px] bg-black" />}
        {layer.kind === "image" && (
          <Svg w={10} h={13}>
            <path d="M0 0h7l3 3v10H0z" fill="#e8e8e8" stroke="none" />
            <path d="M2 5c2-2 5-1 6 1v2c-2 1-5 1-6-1z" fill="#8aa6dc" stroke="#4c6cb0" />
            <path d="M1 11h8" stroke="#555" strokeWidth="2" strokeDasharray="1 1" />
          </Svg>
        )}
      </span>
      <b
        className={clsx(
          "h-[15px] w-[155px] shrink-0 border-2 pl-px leading-[10px] text-[#a6a6a6]",
          shape ? "border-[#a6a6a6]" : "border-transparent",
        )}
      >
        {layer.name}
      </b>
      <div className="ml-[5px] flex gap-[2px]">
        <Box dark>
          <Shy />
        </Box>
        <Box dark={layer.kind !== "image"}>
          {shape && (
            <span className="text-[#808080]">
              <Sun />
            </span>
          )}
        </Box>
        <Box dark>
          <Slash />
        </Box>
        <Box dark={shape}>{shape && <span className="font-serif text-[14px] leading-3 italic">fx</span>}</Box>
        <Box />
        <Box dark />
        <Box dark>{layer.kind === "solid" && <Adjustment />}</Box>
        <Box dark />
      </div>
      <span className="ml-[19px]">
        <Spiral />
      </span>
      <Dropdown label={`Parent of ${layer.name}`} value="None" className="ml-[6px] h-4 w-[89px]" />
    </div>
  );
}

function PropertyRow({ layer }: { layer: Layer }) {
  const position = layer.prop === "Position";
  return (
    <div className="flex h-[17px] items-center border-b border-[#202020] bg-[#242424] pl-1 text-[#a6a6a6]">
      <div className="flex w-[116px] shrink-0 gap-[2px]">
        {position && (
          <>
            <Box>
              <Svg w={6} h={8}>
                <path d="M6 0v8L0 4z" fill="#4c4c4c" stroke="none" />
              </Svg>
            </Box>
            <Box>
              <Svg w={10}>
                <path d="M5 1l4 4-4 4-4-4z" fill={layer.onKey ? "#2d8ceb" : "none"} stroke={layer.onKey ? "#2d8ceb" : "currentColor"} />
              </Svg>
            </Box>
            <Box>
              <Svg w={6} h={8}>
                <path d="M0 0v8l6-4z" fill="#c0c0c0" stroke="none" />
              </Svg>
            </Box>
          </>
        )}
      </div>
      {position ? (
        <>
          <span className="text-[#3d9be0]">
            <StopwatchOn />
          </span>
          <span className="mr-1 ml-[6px]">
            <GraphIcon />
          </span>
          <span className="h-4 w-[151px] bg-[#4c4c4c] pl-[3px]">Position</span>
          <span className="ml-[5px] w-[149px] font-medium text-[#3d9be0]">-1231,0,270,0</span>
        </>
      ) : (
        <>
          <Stopwatch />
          <span className="ml-[6px] w-[172px]">Scale</span>
          <span className="flex w-[150px] items-center">
            <Link />
            <span className="ml-[5px] font-medium text-[#3d9be0]">100,0</span>,
            <span className="font-medium text-[#3d9be0]">100,0</span>%
          </span>
        </>
      )}
      <Spiral />
    </div>
  );
}

function Keyframe({ time, active, hold }: { time: number; active?: boolean; hold?: boolean }) {
  return (
    <span className="absolute top-[2px] -ml-[5px]" style={{ left: at(time) }}>
      <Svg w={10} h={12} className={active ? "text-[#2d8ceb]" : "text-[#b4b4b4]"}>
        {hold ? (
          <path d="M2 1h2l1 1 1-1h2M5 2v8M2 11h2l1-1 1 1h2" strokeWidth="1.3" />
        ) : (
          <path d="M1 1.5h8v2L6.5 5v2.5L9 9v2H1V9l2.500-1.500V5L1 3.500z" fill="currentColor" stroke="none" />
        )}
      </Svg>
    </span>
  );
}

function LayerGraph() {
  return (
    <div className="relative h-40 overflow-hidden bg-[#252525]">
      <div className="absolute inset-x-[7px] inset-y-0">
        <div className="h-full bg-[#343434]" style={{ width: at(1.44) }} />
      </div>
      <div className="absolute inset-0">
        {layers.map((layer) => (
          <div key={layer.id}>
            <div className={clsx("h-[17px] border-b border-[#1c1c1c] px-[7px]", layer.selected ? "bg-[#4a4a4a]" : "bg-[#303030]")}>
              <div className="relative h-4">
                <div
                  className={clsx("absolute inset-y-0", layer.bar)}
                  style={{ left: at(layer.start), width: at(layer.end - layer.start) }}
                />
              </div>
            </div>
            <div className="h-[17px] border-b border-[#1e1e1e] px-[7px]">
              <div className="relative h-4">
                {layer.keys.map((time, i) => (
                  <Keyframe key={time} time={time} active={i > 0} hold={layer.prop === "Scale"} />
                ))}
              </div>
            </div>
          </div>
        ))}
      </div>
      <div className="absolute inset-x-[7px] inset-y-0">
        <div className="absolute inset-y-0 w-px bg-[#3d8fe0]" />
        <div className="absolute inset-y-0 w-px bg-[#d0281e]" style={{ left: at(0.44) }} />
      </div>
    </div>
  );
}

function Ruler() {
  return (
    <div className="overflow-hidden pt-[5px]">
      <div className="flex h-[11px] items-stretch border-y border-black bg-black">
        <span className="w-[7px] rounded-l-full bg-[#2d8ceb]" />
        <span className="w-px bg-[#b4b4b4]" />
        <span className="flex-1 bg-[#686868]" />
        <span className="ml-px w-[6px] rounded-r-full bg-[#2d8ceb]" />
      </div>
      <div className="relative mx-[7px] h-[19px] text-[10px] leading-3 text-[#909090]">
        {["0:00s", "01s", "02s", "03s", "04s", "05s"].map((label, i) => (
          <div key={label} className="absolute top-0 -ml-5 flex w-10 flex-col items-center gap-px" style={{ left: at(i) }}>
            {label}
            {i > 0 && <span className="h-[11px] w-px bg-[#888]" />}
          </div>
        ))}
        <Svg w={16} h={19} className="absolute top-1 -left-2 z-10 text-[#3d8fe0]">
          <path d="M2 1h12v6l-6 6-6-6z" fill="#2d8ceb" stroke="none" />
          <path d="M8 6v13" />
        </Svg>
      </div>
      <div className="h-[15px] bg-[#1f1f1f] px-[7px]">
        <div className="relative flex h-full border-t border-black bg-[#5f5f5f]" style={{ width: at(1.44) }}>
          <span className="-ml-[6px] w-[6px] rounded-l-sm bg-[#2d8ceb]" />
          <span className="-mr-[5px] ml-auto w-[6px] rounded-r-sm border-l border-black bg-[#2d8ceb]" />
        </div>
      </div>
      <div className="mx-[7px] h-1 border-t border-black bg-[#40b52c]" />
      <div className="h-px bg-black" />
    </div>
  );
}

function HeadSep() {
  return <span className="h-[11px] w-px shrink-0 bg-black" />;
}

function TimelineHeader() {
  return (
    <div className="flex h-5 items-center border-y border-black bg-[#303030] pl-1 text-[#b0b0b0]">
      <div className="flex w-[63px] shrink-0 gap-[2px]">
        <Box>
          <Eye />
        </Box>
        <Box>
          <Svg w={12} h={11}>
            <path d="M0 3.5h2.5L6 0v11L2.5 7.5H0z" fill="currentColor" stroke="none" />
            <path d="M7.5 3a3 3 0 0 1 0 5M9 1a5.5 5.5 0 0 1 0 9" />
          </Svg>
        </Box>
        <Box>
          <span className="size-[7px] rounded-full bg-[#b0b0b0]" />
        </Box>
        <Box>
          <FaLock size={10} />
        </Box>
      </div>
      <HeadSep />
      <span className="flex w-[31px] shrink-0 justify-center pl-[7px]">
        <FaTag size={12} />
      </span>
      <HeadSep />
      <span className="w-8 shrink-0 pl-[6px] text-[10px] italic">#</span>
      <HeadSep />
      <span className="w-[173px] shrink-0 pl-1 text-[10px]">Source Name</span>
      <HeadSep />
      <div className="ml-1 flex w-[132px] shrink-0 gap-[2px]">
        <Box>
          <Shy />
        </Box>
        <Box>
          <Sun />
        </Box>
        <Box>
          <Quality />
        </Box>
        <Box>
          <span className="font-serif text-[14px] leading-3 italic">fx</span>
        </Box>
        <Box>
          <Film />
        </Box>
        <Box>
          <MotionBlur size={13} />
        </Box>
        <Box>
          <Adjustment />
        </Box>
        <Box>
          <Cube />
        </Box>
      </div>
      <HeadSep />
      <span className="w-[116px] shrink-0 pl-[5px] text-[10px]">Parent &amp; Link</span>
      <HeadSep />
    </div>
  );
}

function TimelineTools() {
  return (
    <div className="flex h-[35px] items-center pb-px text-[#b4b4b4]">
      <div className="w-[100px] shrink-0 pl-[9px] text-[#1f6aa8]">
        <p className="pl-[3px] text-[15px] leading-[15px] font-bold text-[#2d93ea]">0:00:00:00</p>
        <p className="pl-px text-[10px] leading-3">00000 (25.00 fps)</p>
      </div>
      <label className="flex h-[19px] w-[275px] shrink-0 items-center rounded-sm border border-[#2e2e2e] bg-[#161616] pl-[5px]">
        <Search arrow />
        <input type="text" aria-label="Search layers" className="w-full min-w-0 bg-transparent outline-none" />
      </label>
      <div className="ml-[15px] flex items-center">
        <button type="button" aria-label="Mini flowchart" className="flex w-[18px] justify-center">
          <Svg w={17} h={14}>
            <path d="M0 2h5v2H0zM9 1h6v3H9zM9 7h6v3H9zM11 12h5l-2.5 2z" fill="currentColor" stroke="none" />
            <path d="M5 3h4M7.5 3v5.5H9" />
          </Svg>
        </button>
        <button type="button" aria-label="Draft 3D" className="ml-[15px] flex w-[18px] justify-center">
          <Svg w={17}>
            <path d="M11 6l5 2v5.5l-5 2.5-5-2.5V8zM6 8l5 2 5-2M11 10v6M4 0v8M0 4h8M1 1l6 6M7 1L1 7" strokeWidth="1.1" />
          </Svg>
        </button>
        <button type="button" aria-label="Hide shy layers" className="ml-4 flex w-[18px] justify-center">
          <Svg w={16} h={14}>
            <path d="M0 8h16v5H0z" fill="#777" stroke="none" />
            <path d="M2.5 7V5.500C3 3.500 5 2 8 2s5 1.500 5.500 3.500V7zM8 2v9" strokeWidth="1.5" />
            <path d="M5.500 3v4M10.500 3v4" />
          </Svg>
        </button>
        <button type="button" aria-label="Frame blending" className="ml-2 flex w-[18px] justify-center">
          <Film size={14} />
        </button>
        <button type="button" aria-label="Motion blur" className="ml-2 flex w-[18px] justify-center">
          <MotionBlur size={15} />
        </button>
        <button type="button" aria-label="Graph editor" className="ml-4 flex w-[18px] justify-center">
          <Svg w={16} h={15}>
            <path d="M1.5 2.5h13v11h-13zM4 0v2M12 0v2M0 4h1M0 8h1M3 5c6 0 4 7 10 7" strokeWidth="1.2" />
          </Svg>
        </button>
      </div>
    </div>
  );
}

function TimelineFooter() {
  return (
    <div className="flex h-[17px] items-center border-t border-black bg-[#222] pl-[6px] text-[#a8a8a8]">
      <button type="button" aria-label="Layer switches" className="text-[#3d8fe0]">
        <Svg w={12}>
          <path d="M.5.5h7v7h-7zM2.5 2.5h7v7M4.5 4.5h7v7h-7zM8 6v4M6 8h4" />
        </Svg>
      </button>
      <button type="button" aria-label="Transfer controls" className="ml-[6px]">
        <Svg w={12}>
          <circle cx="4" cy="4" r="3.5" />
          <path d="M4.5 4.5h7v7h-7z" />
        </Svg>
      </button>
      <button type="button" aria-label="In and out" className="ml-[6px]">
        <Svg w={12}>
          <path d="M4 0h4v12H4z" fill="#777" stroke="none" />
          <path d="M3.5 0v3.5L1 6l2.5 2.5V12M8.5 0v3.5L11 6 8.5 8.5V12" fill="currentColor" />
        </Svg>
      </button>
      <button type="button" className="ml-[255px] h-4 w-[134px] shrink-0 rounded-xs border border-[#2c2c2c] bg-[#1a1a1a] leading-[14px] whitespace-nowrap">
        Toggle Switches / Modes
      </button>
      <Svg w={10} h={5} className="ml-[139px]">
        <path d="M0 5l3-3 1 1 2-3 4 5z" fill="#b4b4b4" stroke="none" />
      </Svg>
      <input
        type="range"
        aria-label="Timeline zoom"
        defaultValue={0}
        className="mr-3 ml-[11px] h-3 w-12 appearance-none bg-transparent [&::-webkit-slider-runnable-track]:h-[2px] [&::-webkit-slider-runnable-track]:bg-[#444] [&::-webkit-slider-thumb]:-mt-1 [&::-webkit-slider-thumb]:size-[10px] [&::-webkit-slider-thumb]:appearance-none [&::-webkit-slider-thumb]:rounded-full [&::-webkit-slider-thumb]:border-2 [&::-webkit-slider-thumb]:border-[#999] [&::-webkit-slider-thumb]:bg-[#222]"
      />
      <Svg w={16} h={7}>
        <path d="M0 7l5-5 1 1.5L3.5 7zM4.5 7L10 0l6 7z" fill="#c0c0c0" stroke="none" />
      </Svg>
    </div>
  );
}

function Timeline() {
  return (
    <section className="mt-1 border border-[#3a7cc0] bg-[#262626]">
      <div className="flex h-[27px] items-center pb-px pl-[10px] text-[#d0d0d0]">
        <button type="button" aria-label="Close tab">
          <Close />
        </button>
        <span className="ml-[9px] size-[10px] bg-[#ab9a78]" />
        <h2 className="mr-[7px] ml-[11px]">Transition</h2>
        <Menu />
      </div>
      <div className="flex">
        <div className="w-[577px] shrink-0">
          <TimelineTools />
          <div className="border-r border-black">
            <TimelineHeader />
            <div className="h-40 overflow-hidden">
              {layers.map((layer) => (
                <div key={layer.id}>
                  <LayerRow layer={layer} />
                  <PropertyRow layer={layer} />
                </div>
              ))}
            </div>
          </div>
        </div>
        <div className="min-w-0 flex-1">
          <Ruler />
          <LayerGraph />
        </div>
        <div className="flex w-[17px] shrink-0 flex-col items-center bg-[#232323] pt-[37px] text-[#b0b0b0]">
          <Svg w={11} h={14}>
            <path d="M0 0h11v9.5L5.5 14 0 9.5z" fill="currentColor" stroke="none" />
          </Svg>
          <Svg w={14} h={15} className="mt-[5px] mb-px">
            <path d="M7 1v8H1z" strokeWidth="1.2" />
            <path d="M8 3h6v7H8z" fill="currentColor" stroke="none" />
            <circle cx="6.5" cy="10" r="3" fill="#232323" strokeWidth="1.2" />
          </Svg>
          <div className="w-full flex-1 bg-[#1d1d1d] px-px pb-[10px]">
            <div className="h-full rounded-full bg-[#303030]" />
          </div>
        </div>
      </div>
      <TimelineFooter />
    </section>
  );
}

export default function App() {
  return (
    <main className="flex min-h-screen flex-col bg-white px-[17px] pt-[13px] pb-[22px] font-['Noto_Sans_CJK_SC','Noto_Sans',sans-serif] text-[11px] leading-[15px]">
      <div className="flex flex-1 flex-col rounded-sm shadow-[0_6px_16px_rgba(0,0,0,0.4)]">
        <TitleBar />
        <Toolbar />
        <div className="flex flex-1 flex-col bg-[#161616] px-px">
          <div className="flex flex-1 gap-1">
            <EffectControls />
            <Composition />
            <SidePanels />
          </div>
          <Timeline />
        </div>
      </div>
    </main>
  );
}
